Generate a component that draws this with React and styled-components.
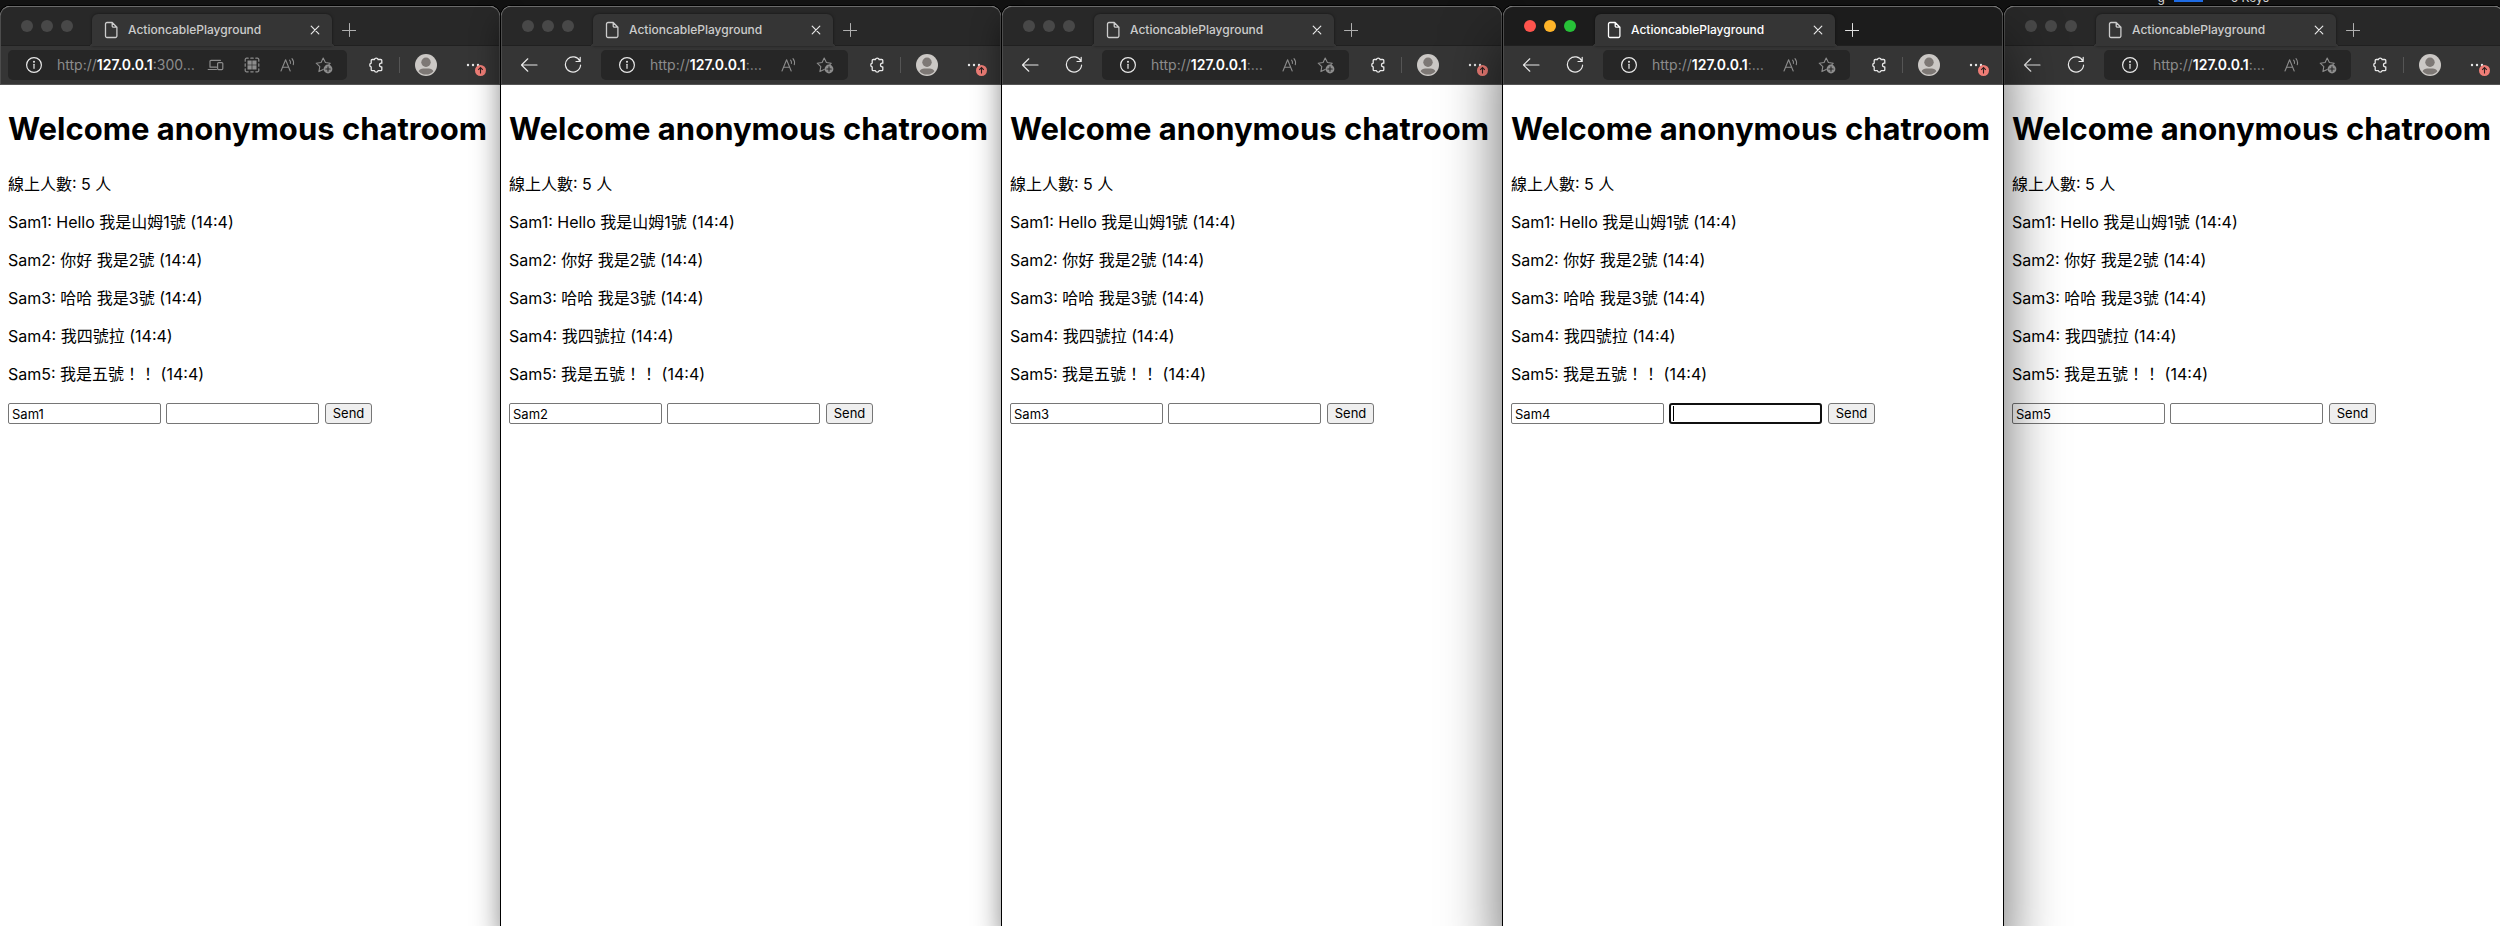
import React from "react";
import styled, { createGlobalStyle, css } from "styled-components";

const GlobalStyle = createGlobalStyle`
  *, *::before, *::after { box-sizing: border-box; }
  body {
    margin: 0;
    background: #131313;
    font-family: Inter, "Noto Sans CJK TC", sans-serif;
    color: #000;
  }
  button, input { font-family: inherit; margin: 0; }
`;

const Desktop = styled.div`
  display: flex;
  flex-direction: column;
  min-height: 100vh;
  overflow: hidden;
`;

const MenuStrip = styled.div`
  display: flex;
  flex: none;
  justify-content: flex-end;
  align-items: flex-end;
  gap: 9px;
  height: 6px;
  padding: 0 231px 4px 0;
  overflow: hidden;
  font-size: 12px;
  line-height: 8px;
  color: #ddd;
`;

const MenuChip = styled.span`
  width: 29px;
  height: 8px;
  background: #1f6feb;
`;

const MenuText = styled.span`
  padding-left: ${(p) => (p.$spaced ? "19px" : "0")};
`;

const Windows = styled.main`
  display: grid;
  flex: 1;
  grid-template-columns: repeat(5, 20%);
  gap: 1px;
`;

const Window = styled.section`
  position: relative;
  z-index: ${(p) => p.$level};
  display: flex;
  flex-direction: column;
  min-width: 0;
  border-radius: 10px 10px 0 0;
  background: #fff;
  box-shadow: 0 0 0 1px #000,
    ${(p) =>
      p.$active
        ? "0 36px 56px 4px rgba(0, 0, 0, 0.55)"
        : "0 16px 28px 0 rgba(0, 0, 0, 0.5)"};
`;

const Chrome = styled.header`
  border: 1px solid #5c5c5c;
  border-color: #6a6a6a #4c4c4c #555;
  border-radius: 10px 10px 0 0;
  background: #353535;
  overflow: hidden;
`;

const TabBar = styled.div`
  display: flex;
  align-items: flex-end;
  height: 39px;
  padding-left: 20px;
  background: ${(p) => (p.$active ? "#1c1c1c" : "#282828")};
  box-shadow: inset 0 -1px 0 #202020;
`;

const Lights = styled.div`
  display: flex;
  align-self: center;
  gap: 8px;
  width: 71px;
  padding-bottom: 1px;
`;

const Light = styled.span`
  width: 12px;
  height: 12px;
  border-radius: 50%;
  background: ${(p) => p.$color};
`;

const Tab = styled.div`
  position: relative;
  display: flex;
  align-items: center;
  width: 240px;
  height: 32px;
  padding: 0 10px 0 12px;
  border-radius: 6px 6px 0 0;
  background: #353535;
  box-shadow: 0 0 3px rgba(0, 0, 0, 0.5);
  color: ${(p) => (p.$active ? "#fff" : "#ccc")};

  &::before,
  &::after {
    content: "";
    position: absolute;
    bottom: 0;
    width: 4px;
    height: 4px;
  }
  &::before {
    right: 100%;
    background: radial-gradient(circle at 0 0, transparent 4px, #353535 4px);
  }
  &::after {
    left: 100%;
    background: radial-gradient(circle at 100% 0, transparent 4px, #353535 4px);
  }
`;

const TabTitle = styled.span`
  flex: 1;
  padding-left: 10px;
  font-size: 12px;
  font-weight: 500;
  line-height: 16px;
`;

const IconButton = styled.button`
  display: inline-flex;
  flex: none;
  align-items: center;
  justify-content: center;
  width: ${(p) => p.$w || 20}px;
  height: 24px;
  padding: 0;
  border: 0;
  background: none;
  color: ${(p) => p.$color || "#e8e8e8"};
`;

const NewTab = styled(IconButton)`
  align-self: center;
  margin-left: 7px;
  padding-top: 6px;
`;

const Toolbar = styled.div`
  display: flex;
  align-items: center;
  height: 38px;
  padding: 0 16px 0 ${(p) => (p.$nav ? "17px" : "7px")};
`;

const Nav = styled.div`
  display: flex;
  gap: 24px;
  width: 82px;
`;

const Address = styled.div`
  display: flex;
  flex: 1;
  align-items: center;
  min-width: 0;
  height: 30px;
  padding: 0 13px 0 16px;
  border-radius: 5px;
  background: #262626;
`;

const Url = styled.div`
  flex: 1;
  min-width: 0;
  padding-left: 13px;
  font-size: 14px;
  line-height: 20px;
  white-space: nowrap;
  color: #8c8c8c;

  b {
    font-weight: 600;
    color: #fff;
  }
`;

const AddressIcons = styled.div`
  display: flex;
  gap: 16px;
`;

const Extensions = styled(IconButton)`
  margin-left: 14px;
`;

const Divider = styled.span`
  width: 1px;
  height: 16px;
  margin: 0 15px 0 8px;
  background: #555;
`;

const MoreWrap = styled.div`
  position: relative;
  display: flex;
  margin-left: 26px;
`;

const Badge = styled.span`
  position: absolute;
  right: -3px;
  bottom: 1px;
  display: flex;
`;

const Page = styled.div`
  padding: 0 8px;
`;

const Title = styled.h1`
  margin: 21px 0;
  font-size: 31px;
  font-weight: 700;
  line-height: 46px;
  white-space: nowrap;
`;

const Line = styled.p`
  margin: 0 0 16px;
  font-size: 16px;
  line-height: 22px;
`;

const Form = styled.form`
  display: flex;
  align-items: center;
  gap: 5px;
  padding-top: 2px;
`;

const control = css`
  height: 21px;
  border: 1px solid #767676;
  border-radius: 2px;
  font-size: 13px;
  line-height: 15px;
  color: #000;
`;

const Field = styled.input`
  ${control}
  width: 153px;
  padding: 1px 3px;
  background: #fff;
  ${(p) =>
    p.$focused &&
    css`
      border: 2px solid #101010;
      border-radius: 3px;
      background: linear-gradient(#000, #000) 2px center / 1px 15px no-repeat #fff;
    `}
`;

const Send = styled.button`
  ${control}
  width: 47px;
  margin-left: 1px;
  padding: 0;
  border-radius: 3px;
  background: #efefef;
`;

function Svg({ w = 16, h = 16, sw = 1, children }) {
  return (
    <svg
      width={w}
      height={h}
      viewBox={`0 0 ${w} ${h}`}
      fill="none"
      stroke="currentColor"
      strokeWidth={sw}
      strokeLinecap="round"
      strokeLinejoin="round"
      aria-hidden="true"
    >
      {children}
    </svg>
  );
}

const FileIcon = () => (
  <Svg w={14} h={18} sw={1.3}>
    <path d="M3 1.5h5.2L12.9 6.2V15a1.5 1.5 0 0 1-1.5 1.5H3A1.5 1.5 0 0 1 1.5 15V3A1.5 1.5 0 0 1 3 1.5zM8.2 1.7V5a1.2 1.2 0 0 0 1.2 1.2h3.3" />
  </Svg>
);

const CloseIcon = () => (
  <Svg w={10} h={10} sw={1.2}>
    <path d="M1.2 1.2l7.6 7.6M8.8 1.2L1.2 8.8" />
  </Svg>
);

const PlusIcon = () => (
  <Svg w={14} h={14}>
    <path d="M7.5 .5v13M.5 7.5h13.5" />
  </Svg>
);

const BackIcon = () => (
  <Svg w={18} h={16} sw={1.2}>
    <path d="M1.5 8H17M7.8 1.8L1.5 8l6.3 6.2" />
  </Svg>
);

const ReloadIcon = () => (
  <Svg w={18} h={18} sw={1.2}>
    <path d="M15.9 5.2A7.6 7.6 0 1 0 16.6 9M16.2 1.3v4.2H12" />
  </Svg>
);

const InfoIcon = () => (
  <Svg w={18} h={18} sw={1.2}>
    <circle cx="9" cy="9" r="7.4" />
    <path d="M9 8.3v4" />
    <circle cx="9" cy="5.8" r=".5" fill="currentColor" stroke="none" />
    <circle cx="9" cy="5.8" r=".4" />
  </Svg>
);

const DevicesIcon = () => (
  <Svg w={18} h={14} sw={1.2}>
    <path d="M9.5 11.5H1.2M3 9V3.3A1 1 0 0 1 4 2.3h9.5M3 9.2h6.5" />
    <rect x="10.6" y="4.6" width="5.2" height="7" rx="1" />
  </Svg>
);

const AppsIcon = () => (
  <Svg w={16} h={16} sw={1.2}>
    <path d="M1.2 4.2V2.6a1.4 1.4 0 0 1 1.4-1.4h1.6M11.8 1.2h1.6a1.4 1.4 0 0 1 1.4 1.4v1.6M14.8 11.8v1.6a1.4 1.4 0 0 1-1.4 1.4h-1.6M4.2 14.8H2.6a1.4 1.4 0 0 1-1.4-1.4v-1.6M6.8 1.2h2.4M6.8 14.8h2.4M1.2 6.8v2.4M14.8 6.8v2.4" />
    <g fill="currentColor" stroke="none">
      <rect x="3.5" y="3.5" width="4.2" height="4.2" />
      <rect x="8.3" y="3.5" width="4.2" height="4.2" />
      <rect x="3.5" y="8.3" width="4.2" height="4.2" />
      <rect x="8.3" y="8.3" width="4.2" height="4.2" />
    </g>
  </Svg>
);

const ReadAloudIcon = () => (
  <Svg w={18} h={16} sw={1.1}>
    <path d="M2 14L6.6 2.8 11.2 14M3.6 10.3h6M10.6 3.2a3.6 3.6 0 0 1 .8 3.2M13 1.6a6.6 6.6 0 0 1 1.3 6" />
  </Svg>
);

const StarIcon = () => (
  <Svg w={18} h={18} sw={1.1}>
    <path d="M8.2 13.4l-4.3 2.2.9-4.9L1.2 7.2l4.9-.7L8.2 2l2.2 4.5 4.9.7-1.4 1.3" />
    <circle cx="13" cy="13" r="4.4" fill="currentColor" stroke="none" />
    <path d="M13 10.8v4.4M10.8 13h4.4" stroke="#262626" />
  </Svg>
);

const ExtensionIcon = () => (
  <Svg w={16} h={18} sw={1.3}>
    <path d="M4.2 3.5h2.2a1.9 1.9 0 0 1 3.7 0h2.7a1 1 0 0 1 1 1v2.7h-.9a1.9 1.9 0 0 0 0 3.7h.9v2.8a1 1 0 0 1-1 1h-2.7a1.9 1.9 0 0 1-3.7 0H4.2a1 1 0 0 1-1-1v-2.8a1.9 1.9 0 0 1 0-3.7V4.5a1 1 0 0 1 1-1z" />
  </Svg>
);

const AvatarIcon = () => (
  <svg width="22" height="22" viewBox="0 0 22 22" aria-hidden="true">
    <circle cx="11" cy="11" r="11" fill="#cbc8c5" />
    <circle cx="11" cy="8.2" r="4.7" fill="#7d7875" />
    <path d="M3.6 17.2c.8-2 2.6-2.8 4.6-2.8h5.6c2 0 3.8.8 4.6 2.8a9.8 9.8 0 0 1-14.8 0z" fill="#7d7875" />
  </svg>
);

const DotsIcon = () => (
  <svg width="18" height="4" viewBox="0 0 18 4" fill="currentColor" aria-hidden="true">
    <circle cx="4" cy="2" r="1.2" />
    <circle cx="9" cy="2" r="1.2" />
    <circle cx="14" cy="2" r="1.2" />
  </svg>
);

const UpdateIcon = () => (
  <svg width="11" height="11" viewBox="0 0 11 11" fill="none" aria-hidden="true">
    <circle cx="5.5" cy="5.5" r="5.5" fill="#ee7d76" />
    <path d="M5.5 8.6V2.8M3.2 4.9l2.3-2.3 2.3 2.3" stroke="#2d2020" strokeWidth="1.1" />
  </svg>
);

const MESSAGES = [
  "Sam1: Hello 我是山姆1號 (14:4)",
  "Sam2: 你好 我是2號 (14:4)",
  "Sam3: 哈哈 我是3號 (14:4)",
  "Sam4: 我四號拉 (14:4)",
  "Sam5: 我是五號！！ (14:4)",
];

const WINDOWS = [
  { name: "Sam1", level: 1, wide: true },
  { name: "Sam2", level: 2 },
  { name: "Sam3", level: 3 },
  { name: "Sam4", level: 5, active: true },
  { name: "Sam5", level: 4 },
];

function BrowserWindow({ name, level, wide, active }) {
  const lights = active ? ["#ff544d", "#ffb429", "#27c138"] : ["#484848", "#484848", "#484848"];
  return (
    <Window $level={level} $active={active}>
      <Chrome>
        <TabBar $active={active}>
          <Lights>
            {lights.map((color, i) => (
              <Light key={i} $color={color} />
            ))}
          </Lights>
          <Tab $active={active}>
            <FileIcon />
            <TabTitle>ActioncablePlayground</TabTitle>
            <IconButton $w={14} aria-label="Close tab"><CloseIcon /></IconButton>
          </Tab>
          <NewTab $color={active ? "#e0e0e0" : "#b0b0b0"} aria-label="New tab"><PlusIcon /></NewTab>
        </TabBar>
        <Toolbar $nav={!wide}>
          {!wide && (
            <Nav>
              <IconButton aria-label="Back"><BackIcon /></IconButton>
              <IconButton aria-label="Reload"><ReloadIcon /></IconButton>
            </Nav>
          )}
          <Address>
            <IconButton aria-label="Site information"><InfoIcon /></IconButton>
            <Url>http://<b>127.0.0.1</b>{wide ? ":300…" : ":…"}</Url>
            <AddressIcons>
              {wide && (
                <>
                  <IconButton $color="#8c8c8c" aria-label="Send to device"><DevicesIcon /></IconButton>
                  <IconButton $color="#8c8c8c" aria-label="Apps"><AppsIcon /></IconButton>
                </>
              )}
              <IconButton $color="#8c8c8c" aria-label="Read aloud"><ReadAloudIcon /></IconButton>
              <IconButton $color="#8c8c8c" aria-label="Add to favorites"><StarIcon /></IconButton>
            </AddressIcons>
          </Address>
          <Extensions $w={30} aria-label="Extensions"><ExtensionIcon /></Extensions>
          <Divider />
          <IconButton $w={22} aria-label="Profile"><AvatarIcon /></IconButton>
          <MoreWrap>
            <IconButton aria-label="Settings and more"><DotsIcon /></IconButton>
            <Badge><UpdateIcon /></Badge>
          </MoreWrap>
        </Toolbar>
      </Chrome>
      <Page>
        <Title>Welcome anonymous chatroom</Title>
        <Line>線上人數: 5 人</Line>
        {MESSAGES.map((m) => (
          <Line key={m}>{m}</Line>
        ))}
        <Form onSubmit={(e) => e.preventDefault()}>
          <Field aria-label="Name" defaultValue={name} />
          <Field aria-label="Message" $focused={active} />
          <Send type="submit">Send</Send>
        </Form>
      </Page>
    </Window>
  );
}

export default function App() {
  return (
    <Desktop>
      <GlobalStyle />
      <MenuStrip>
        <MenuText>g</MenuText>
        <MenuChip />
        <MenuText $spaced>6 Keys</MenuText>
      </MenuStrip>
      <Windows>
        {WINDOWS.map((w) => (
          <BrowserWindow key={w.name} {...w} />
        ))}
      </Windows>
    </Desktop>
  );
}
